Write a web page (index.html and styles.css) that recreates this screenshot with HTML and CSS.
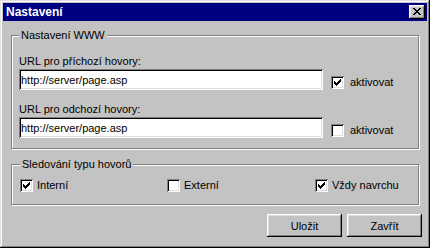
FILE: index.html
```html
<!DOCTYPE html>
<html lang="cs">
<head>
  <meta charset="UTF-8">
  <title>Nastavení</title>
  <link rel="stylesheet" href="styles.css">
</head>
<body>

  <!-- Dialog window -->
  <div class="window">
    <div class="titlebar">
      <span class="title">Nastavení</span>
      <button class="close-btn" aria-label="Zavřít">
        <svg width="16" height="14" viewBox="0 0 16 14" shape-rendering="crispEdges">
          <path fill="#000" d="M4 3h2v1h-2z M10 3h2v1h-2z M5 4h2v1h-2z M9 4h2v1h-2z M6 5h4v1h-4z M7 6h2v1h-2z M6 7h4v1h-4z M5 8h2v1h-2z M9 8h2v1h-2z M4 9h2v1h-2z M10 9h2v1h-2z"/>
        </svg>
      </button>
    </div>

    <div class="content">
      <!-- WWW settings -->
      <fieldset class="group group-www">
        <legend>Nastavení WWW</legend>
        <div class="field">
          <div class="field-label">URL pro příchozí hovory:</div>
          <div class="field-row">
            <input class="textbox" type="text" value="http://server/page.asp">
            <div class="check check-side">
              <span class="box">
                <svg width="13" height="13" viewBox="0 0 13 13" shape-rendering="crispEdges"><path fill="#000" d="M9 3h1v1h-1z M8 4h2v1h-2z M3 5h1v1h-1z M7 5h3v1h-3z M3 6h2v1h-2z M6 6h3v1h-3z M3 7h5v1h-5z M4 8h3v1h-3z M5 9h1v1h-1z"/></svg>
              </span>
              <span>aktivovat</span>
            </div>
          </div>
        </div>
        <div class="field field-next">
          <div class="field-label">URL pro odchozí hovory:</div>
          <div class="field-row">
            <input class="textbox" type="text" value="http://server/page.asp">
            <div class="check check-side">
              <span class="box"></span>
              <span>aktivovat</span>
            </div>
          </div>
        </div>
      </fieldset>

      <!-- Call type tracking -->
      <fieldset class="group group-calls">
        <legend>Sledování typu hovorů</legend>
        <div class="check-grid">
          <div class="check">
            <span class="box">
              <svg width="13" height="13" viewBox="0 0 13 13" shape-rendering="crispEdges"><path fill="#000" d="M9 3h1v1h-1z M8 4h2v1h-2z M3 5h1v1h-1z M7 5h3v1h-3z M3 6h2v1h-2z M6 6h3v1h-3z M3 7h5v1h-5z M4 8h3v1h-3z M5 9h1v1h-1z"/></svg>
            </span>
            <span>Interní</span>
          </div>
          <div class="check">
            <span class="box"></span>
            <span>Externí</span>
          </div>
          <div class="check">
            <span class="box">
              <svg width="13" height="13" viewBox="0 0 13 13" shape-rendering="crispEdges"><path fill="#000" d="M9 3h1v1h-1z M8 4h2v1h-2z M3 5h1v1h-1z M7 5h3v1h-3z M3 6h2v1h-2z M6 6h3v1h-3z M3 7h5v1h-5z M4 8h3v1h-3z M5 9h1v1h-1z"/></svg>
            </span>
            <span>Vždy navrchu</span>
          </div>
        </div>
      </fieldset>

      <div class="buttons">
        <button class="btn">Uložit</button>
        <button class="btn">Zavřít</button>
      </div>
    </div>
  </div>

</body>
</html>
```

FILE: styles.css
```css
    body {
      margin: 0;
      padding: 0;
      background-color: #c3c3c3;
      font-family: "Liberation Sans", Arial, sans-serif;
      font-size: 11px;
      line-height: 13px;
      color: #000;
    }
    .window {
      width: 430px;
      height: 248px;
      box-sizing: border-box;
      padding: 3px;
      background-color: #c3c3c3;
      box-shadow: inset -1px -1px 0 #000, inset 1px 1px 0 #dfdfdf,
                  inset -2px -2px 0 #808080, inset 2px 2px 0 #fff;
      display: flex;
      flex-direction: column;
    }
    .titlebar {
      height: 18px;
      background-color: #000080;
      display: flex;
      justify-content: space-between;
      align-items: center;
      padding: 0 2px 0 3px;
    }
    .titlebar .title {
      color: #fff;
      font-weight: bold;
      font-size: 12px;
    }
    .close-btn {
      width: 16px;
      height: 14px;
      padding: 0;
      border: none;
      display: block;
      background-color: #c3c3c3;
      box-shadow: inset -1px -1px 0 #000, inset 1px 1px 0 #fff,
                  inset -2px -2px 0 #808080, inset 2px 2px 0 #dfdfdf;
    }
    .close-btn svg {
      display: block;
    }
    .content {
      padding: 0 5px 0 8px;
    }
    .group {
      margin: 0 3px 0 0;
      border: 1px solid #808080;
      box-shadow: 1px 1px 0 #fff, inset 1px 1px 0 #fff;
      min-inline-size: 0;
    }
    .group legend {
      padding: 0 2px;
      line-height: 13px;
      background-color: #c3c3c3;
    }
    .group-www {
      margin-top: 8px;
      padding: 13px 7px 10px 7px;
    }
    .group-calls {
      margin-top: 9px;
      padding: 8px 7px 12px 8px;
    }
    .field-next {
      margin-top: 13px;
    }
    .field-label {
      margin-bottom: 1px;
    }
    .field-row {
      display: flex;
      align-items: flex-start;
      gap: 8px;
    }
    .textbox {
      width: 304px;
      height: 21px;
      box-sizing: border-box;
      margin: 0;
      padding: 0 2px;
      border: none;
      outline: none;
      background-color: #fff;
      font-family: "Liberation Sans", Arial, sans-serif;
      font-size: 11px;
      color: #000;
      box-shadow: inset 1px 1px 0 #808080, inset -1px -1px 0 #fff,
                  inset 2px 2px 0 #000, inset -2px -2px 0 #dfdfdf;
    }
    .check {
      display: flex;
      align-items: flex-start;
      gap: 4px;
    }
    .check-side {
      margin-top: 7px;
      gap: 6px;
    }
    .box {
      width: 13px;
      height: 13px;
      flex: none;
      background-color: #fff;
      box-shadow: inset 1px 1px 0 #808080, inset -1px -1px 0 #fff,
                  inset 2px 2px 0 #000, inset -2px -2px 0 #dfdfdf;
    }
    .box svg {
      display: block;
    }
    .check-grid {
      display: grid;
      grid-template-columns: 147px 148px auto;
    }
    .buttons {
      display: flex;
      justify-content: flex-end;
      gap: 5px;
      margin-top: 9px;
    }
    .btn {
      width: 75px;
      height: 23px;
      padding: 0;
      border: none;
      background-color: #c3c3c3;
      font-family: "Liberation Sans", Arial, sans-serif;
      font-size: 11px;
      color: #000;
      box-shadow: inset -1px -1px 0 #000, inset 1px 1px 0 #fff,
                  inset -2px -2px 0 #808080, inset 2px 2px 0 #dfdfdf;
    }
```
